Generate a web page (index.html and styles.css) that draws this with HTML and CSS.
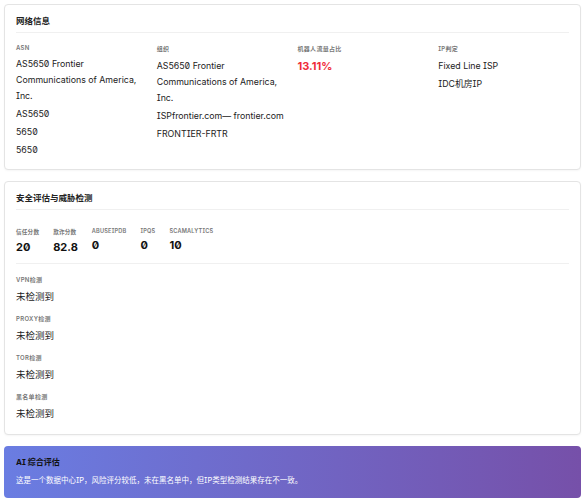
FILE: index.html
```html
<!DOCTYPE html>
<html lang="zh-CN">
<head>
    <meta charset="UTF-8">
    <meta name="viewport" content="width=device-width, initial-scale=1.0">
    <title>IP 检测结果</title>
    <link rel="stylesheet" href="styles.css">
</head>
<body>
    <div class="card">
        <div class="card-title">网络信息</div>
        <div class="info-grid">
            <div class="info-col">
                <div class="label">ASN</div>
                <div class="value">AS5650 Frontier Communications of America, Inc.</div>
                <div class="value">AS5650</div>
                <div class="value">5650</div>
                <div class="value">5650</div>
            </div>
            <div class="info-col">
                <div class="label">组织</div>
                <div class="value">AS5650 Frontier Communications of America, Inc.</div>
                <div class="value">ISPfrontier.com— frontier.com</div>
                <div class="value">FRONTIER-FRTR</div>
            </div>
            <div class="info-col">
                <div class="label">机器人流量占比</div>
                <div class="value big red">13.11%</div>
            </div>
            <div class="info-col">
                <div class="label">IP判定</div>
                <div class="value">Fixed Line ISP</div>
                <div class="value">IDC机房IP</div>
            </div>
        </div>
    </div>

    <div class="card">
        <div class="card-title">安全评估与威胁检测</div>
        <div class="score-row">
            <div class="score">
                <div class="label">信任分数</div>
                <div class="score-num">20</div>
            </div>
            <div class="score">
                <div class="label">欺诈分数</div>
                <div class="score-num">82.8</div>
            </div>
            <div class="score">
                <div class="label">AbuseIPDB</div>
                <div class="score-num">0</div>
            </div>
            <div class="score">
                <div class="label">IPQS</div>
                <div class="score-num">0</div>
            </div>
            <div class="score">
                <div class="label">Scamalytics</div>
                <div class="score-num">10</div>
            </div>
        </div>
        <div class="detect-list">
            <div class="detect">
                <div class="label">VPN检测</div>
                <div class="detect-value">未检测到</div>
            </div>
            <div class="detect">
                <div class="label">Proxy检测</div>
                <div class="detect-value">未检测到</div>
            </div>
            <div class="detect">
                <div class="label">Tor检测</div>
                <div class="detect-value">未检测到</div>
            </div>
            <div class="detect">
                <div class="label">黑名单检测</div>
                <div class="detect-value">未检测到</div>
            </div>
        </div>
    </div>

    <div class="ai-box">
        <div class="ai-title">AI 综合评估</div>
        <div class="ai-text">这是一个数据中心IP，风险评分较低，未在黑名单中，但IP类型检测结果存在不一致。</div>
    </div>
</body>
</html>
```

FILE: styles.css
```css
body {
    font-family: Inter, "Noto Sans CJK SC", sans-serif;
    font-feature-settings: "zero", "cv08";
    margin: 0;
    padding: 4px 4px;
    background: #fff;
    color: #222;
}
.card {
    background: white;
    border: 1px solid #e4e4e4;
    border-radius: 4px;
    box-shadow: 0 1px 2px rgba(0,0,0,0.04);
    padding: 9px 11px 9px;
    margin-bottom: 11px;
}
.card-title {
    font-size: 8.5px;
    font-weight: 600;
    color: #222;
    padding-bottom: 6px;
    border-bottom: 1px solid #f0f0f0;
    margin-bottom: 11px;
}
.info-grid {
    display: grid;
    grid-template-columns: repeat(4, 1fr);
    gap: 10px;
}
.label {
    font-size: 6px;
    font-weight: 600;
    color: #777;
    text-transform: uppercase;
    letter-spacing: 0.3px;
    margin-bottom: 5px;
}
.value {
    font-size: 8.8px;
    line-height: 16px;
    color: #222;
    margin-bottom: 2px;
}
.big {
    font-size: 11px;
    font-weight: 700;
}
.red {
    color: #ef2d3a;
}
.score-row {
    display: flex;
    gap: 14px;
    padding: 7px 0 9px;
    border-bottom: 1px solid #f0f0f0;
    margin-bottom: 11px;
}
.score .label {
    font-size: 5.6px;
    letter-spacing: 0.2px;
    margin-bottom: 4px;
}
.score-num {
    font-size: 11px;
    font-weight: 700;
    color: #111;
}
.detect {
    margin-bottom: 9px;
}
.detect:last-child {
    margin-bottom: 0;
}
.card:nth-child(2) {
    padding-bottom: 12px;
}
.detect-value {
    font-size: 9.5px;
    line-height: 16px;
    color: #222;
}
.ai-box {
    background: linear-gradient(90deg, #6a7de2 0%, #7650a9 100%);
    border-radius: 4px;
    padding: 10px 12px 13px;
}
.ai-title {
    font-size: 8px;
    font-weight: 700;
    color: #111;
    margin-bottom: 7px;
}
.ai-text {
    font-size: 7.5px;
    color: #fff;
}
```
